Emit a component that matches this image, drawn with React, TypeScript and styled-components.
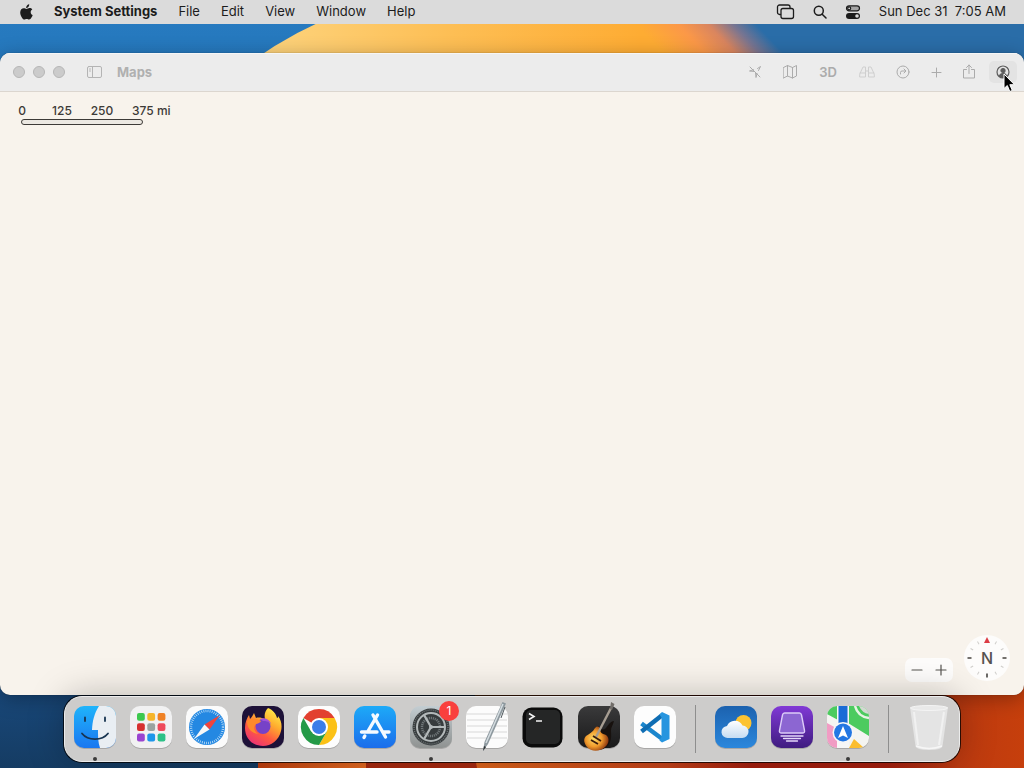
import React from 'react';
import styled, { createGlobalStyle, css } from 'styled-components';

const GlobalStyle = createGlobalStyle`
  * { box-sizing: border-box; }
  html, body { margin: 0; height: 100%; overflow: hidden; }
  #root { height: 100%; }
  body, button { font-family: Inter, "Liberation Sans", sans-serif; }
  button { border: 0; padding: 0; background: none; color: inherit; cursor: default; }
  svg { display: block; }
`;

const Desktop = styled.div`
  position: relative;
  isolation: isolate;
  display: flex;
  flex-direction: column;
  min-height: 100vh;
  overflow: hidden;
  background: #17416b;
`;

const WallpaperArt = styled.svg`
  position: absolute;
  inset: 0;
  z-index: -1;
  width: 100%;
  height: 100%;
`;

const MenuBar = styled.header`
  display: flex;
  align-items: center;
  justify-content: space-between;
  height: 24px;
  padding: 0 18px 1px 20px;
  background: #dbdbdb;
  color: #1c1c1c;
`;

const MenuGroup = styled.nav`
  display: flex;
  align-items: center;
  gap: 21px;
`;

const StatusGroup = styled.div`
  display: flex;
  align-items: center;
  gap: 18px;
`;

const MenuItem = styled.button<{ $bold?: boolean }>`
  font-size: 13px;
  line-height: 15px;
  white-space: pre;
  font-weight: ${(p) => (p.$bold ? 700 : 400)};
`;

const MapWindow = styled.main`
  display: flex;
  flex: 1;
  flex-direction: column;
  margin-top: 29px;
  margin-bottom: 1px;
  border-radius: 10px;
  overflow: hidden;
  background: #f8f3ec;
  box-shadow: 0 0 1px rgba(0, 0, 0, 0.6), 0 4px 20px rgba(0, 0, 0, 0.3);
`;

const TitleBar = styled.div`
  display: flex;
  align-items: center;
  height: 39px;
  padding: 0 7px 0 13px;
  background: #ececec;
  border-bottom: 1px solid #dcd6cf;
  box-shadow: inset 0 1px #f6f6f6;
`;

const TrafficLights = styled.div`
  display: flex;
  gap: 8px;
`;

const TrafficLight = styled.button`
  width: 12px;
  height: 12px;
  border: 1px solid #b6b6b6;
  border-radius: 50%;
  background: #cbcbcb;
`;

const SidebarToggle = styled.button`
  margin-left: 21px;
  color: #b4b4b4;
`;

const WindowTitle = styled.h1`
  margin: 0 0 0 14px;
  color: #b0b0b0;
  font-size: 13px;
  line-height: 16px;
  font-weight: 700;
`;

const Toolbar = styled.div`
  display: flex;
  gap: 6px;
  margin-left: auto;
`;

const ToolButton = styled.button<{ $width?: number; $tone?: 'faint' | 'active' }>`
  display: flex;
  align-items: center;
  justify-content: center;
  width: ${(p) => p.$width ?? 28}px;
  height: 22px;
  border-radius: 5px;
  color: #ababab;
  font-size: 13px;
  font-weight: 600;
  ${(p) => p.$tone === 'faint' && css`color: #cfcfcf;`}
  ${(p) => p.$tone === 'active' && css`
    color: #5c5c5c;
    background: #e3e3e3;
  `}
`;

const MapCanvas = styled.section`
  display: flex;
  flex: 1;
  flex-direction: column;
  justify-content: space-between;
  padding: 12px 13px 13px 2px;
`;

const Scale = styled.div`
  color: #3d3a37;
`;

const ScaleLabels = styled.div`
  display: grid;
  grid-template-columns: repeat(4, 40px);
  font-size: 12px;
  line-height: 14px;
  font-weight: 500;
  text-align: center;
  white-space: nowrap;
`;

const ScaleEnd = styled.span`
  padding-left: 10px;
  text-align: left;
`;

const ScaleBar = styled.div`
  width: 122px;
  height: 6px;
  margin: 1px 0 0 19px;
  border: 1px solid #3d3a37;
  border-radius: 3px;
  background: #ece8e2;
`;

const MapControls = styled.div`
  display: flex;
  align-items: flex-end;
  justify-content: flex-end;
  gap: 10px;
`;

const ZoomPill = styled.div`
  display: flex;
  height: 24px;
  border-radius: 7px;
  background: #fdfcfb;
`;

const ZoomButton = styled.button`
  display: grid;
  place-items: center;
  width: 24px;
  height: 24px;
  color: #55524f;
`;

const CompassButton = styled.button`
  width: 48px;
  height: 48px;
`;

const Dock = styled.nav`
  align-self: center;
  display: flex;
  margin-bottom: 6px;
  padding: 2px 2px 0;
  border: 1px solid #ececec;
  border-radius: 18px;
  background: #cdcccb;
  box-shadow: 0 0 0 1px rgba(0, 0, 0, 0.75), 0 0 36px rgba(0, 0, 0, 0.26);
  z-index: 1;
`;

const DockItem = styled.button<{ $running?: boolean }>`
  position: relative;
  display: flex;
  flex-direction: column;
  align-items: center;
  gap: 2px;
  width: 56px;
  &::after {
    content: '';
    width: 4px;
    height: 4px;
    border-radius: 50%;
    background: ${(p) => (p.$running ? '#3b3b3b' : 'transparent')};
  }
`;

const DockDivider = styled.hr`
  width: 1px;
  height: 48px;
  margin: 6px 12px 0;
  border: 0;
  background: #8e8e8e;
`;

const Badge = styled.span`
  position: absolute;
  top: 2px;
  right: 0;
  width: 20px;
  height: 20px;
  border-radius: 50%;
  background: #f9403d;
  color: #fff;
  font-size: 12px;
  line-height: 20px;
`;

const Pointer = styled.svg`
  position: absolute;
  top: 73px;
  right: 8px;
  z-index: 2;
`;

const Wallpaper = () => (
  <WallpaperArt viewBox="0 0 1024 768" preserveAspectRatio="none" aria-hidden="true">
    <defs>
      <linearGradient id="sky" x1="0" y1="0" x2="0" y2="1">
        <stop offset="0" stopColor="#277bc1" />
        <stop offset=".1" stopColor="#2577bb" />
        <stop offset=".9" stopColor="#19487a" />
        <stop offset="1" stopColor="#153c63" />
      </linearGradient>
      <linearGradient id="petal" gradientUnits="userSpaceOnUse" x1="265" y1="40" x2="640" y2="40">
        <stop offset="0" stopColor="#fdd37c" />
        <stop offset=".5" stopColor="#fdbe54" />
        <stop offset="1" stopColor="#feac33" />
      </linearGradient>
      <linearGradient id="fade" gradientUnits="userSpaceOnUse" x1="670" y1="60" x2="733" y2="0">
        <stop offset="0" stopColor="#feac33" />
        <stop offset=".35" stopColor="#fb9848" />
        <stop offset=".6" stopColor="#d9855f" />
        <stop offset=".8" stopColor="#7a7590" />
        <stop offset="1" stopColor="#2a6da8" />
      </linearGradient>
      <linearGradient id="ember" gradientUnits="userSpaceOnUse" x1="475" y1="0" x2="1024" y2="0">
        <stop offset="0" stopColor="#e2661c" />
        <stop offset=".35" stopColor="#c9441a" />
        <stop offset=".5" stopColor="#a9200f" />
        <stop offset=".75" stopColor="#a9200f" />
        <stop offset=".88" stopColor="#bd3a10" />
        <stop offset="1" stopColor="#c63f0c" />
      </linearGradient>
      <linearGradient id="coal" gradientUnits="userSpaceOnUse" x1="258" y1="0" x2="366" y2="0">
        <stop offset="0" stopColor="#c2400f" />
        <stop offset="1" stopColor="#e86c22" />
      </linearGradient>
    </defs>
    <rect width="1024" height="768" fill="url(#sky)" />
    <path d="M240 70Q290 32 340 14H640V70Z" fill="url(#petal)" />
    <path d="M639 14H1024V70H639Z" fill="url(#fade)" />
    <path d="M475 768V640H1024V768Z" fill="url(#ember)" />
    <path d="M258 768V740H366V768Z" fill="url(#coal)" />
    <path d="M366 768V740H472L477 768Z" fill="#ab2a10" />
  </WallpaperArt>
);

const Tile = ({ fill }: { fill: string }) => (
  <>
    <rect x="7" y="8" width="42" height="42" rx="10" fill="#000" opacity=".18" />
    <rect x="7" y="7" width="42" height="42" rx="10" fill={fill} />
  </>
);

const Art = ({ children }: { children: React.ReactNode }) => (
  <svg width="56" height="56" viewBox="0 0 56 56" fill="none" aria-hidden="true">{children}</svg>
);

const Finder = () => (
  <Art>
    <defs>
      <linearGradient id="fb" x1="0" y1="0" x2="0" y2="1"><stop stopColor="#1fb4fb" /><stop offset="1" stopColor="#1a77f0" /></linearGradient>
      <clipPath id="fc"><rect x="7" y="7" width="42" height="42" rx="10" /></clipPath>
    </defs>
    <Tile fill="url(#fb)" />
    <path clipPath="url(#fc)" d="M32 7C27 15 25.500 22 25 31h6c0 7 0 12 2 18h16V7Z" fill="#e9eef3" />
    <path d="M18 18.500v3.500M38 18.500v3.500" stroke="#183450" strokeWidth="1.800" strokeLinecap="round" />
    <path d="M15 34.500c6 7.500 20 7.500 26 0" stroke="#183450" strokeWidth="1.800" strokeLinecap="round" />
  </Art>
);

const launchpadColors = ['#3dc84e', '#f6b52b', '#ef8125', '#d6302f', '#9aa3a0', '#ee4a5b', '#9a44d0', '#1e96ea', '#2cc187'];
const Launchpad = () => (
  <Art>
    <Tile fill="#f1f1f2" />
    {launchpadColors.map((c, i) => (
      <rect key={c} x={14 + (i % 3) * 10.3} y={14 + Math.floor(i / 3) * 10.3} width="7.800" height="7.800" rx="2" fill={c} />
    ))}
  </Art>
);

const Safari = () => (
  <Art>
    <Tile fill="#fbfbfb" />
    <circle cx="28" cy="28" r="18" fill="#2488e2" />
    <circle cx="28" cy="28" r="16" stroke="#d6ecfb" strokeWidth="2.4" strokeDasharray=".7 1.4" />
    <path d="M41 16 25.500 25.500l5 5Z" fill="#f0443c" />
    <path d="M15 40 25.500 25.500l5 5Z" fill="#f7f7f7" />
  </Art>
);

const Firefox = () => (
  <Art>
    <defs>
      <linearGradient id="ff" x1=".8" y1="0" x2=".2" y2="1"><stop stopColor="#fff04a" /><stop offset=".35" stopColor="#ffab2e" /><stop offset=".65" stopColor="#ff5a40" /><stop offset="1" stopColor="#e82d7d" /></linearGradient>
    </defs>
    <Tile fill="#1d1138" />
    <path d="M33 9c5 2 8 6 9 10 1 0 1-1 1-2 4 5 4 11 3 15-2 9-10 15-18 15-11 0-18-8-18-18 0-6 2-10 4-13l1 4c2-2 3-4 4-6l2 5c3-1 6 0 9 1-1-4 0-8 3-11Z" fill="url(#ff)" />
    <circle cx="28" cy="27.500" r="7.500" fill="#7642c7" />
    <path d="M12 22c4-3 10-3 14 0-1 3-5 2-6 4-2 3 0 7 3 9-7-1-11-6-11-13Z" fill="#ff8a2b" />
    <path d="M25 20c5-2 10 1 11 5-3-3-5-3-8-3Z" fill="#a252d8" />
  </Art>
);

const Chrome = () => (
  <Art>
    <Tile fill="#fdfdfd" />
    <path d="M28 28 12.410 19A18 18 0 0 1 43.590 19Z" fill="#e2402f" />
    <path d="M28 19H43.590A18 18 0 0 1 28 46L35.800 32.500Z" fill="#fbc116" />
    <path d="M20.200 32.500 12.410 19A18 18 0 0 0 28 46L35.800 32.500Z" fill="#249a47" />
    <circle cx="28" cy="28" r="9" fill="#fff" />
    <circle cx="28" cy="28" r="7" fill="#3b7de9" />
  </Art>
);

const AppStore = () => (
  <Art>
    <defs><linearGradient id="as" x1="0" y1="0" x2="0" y2="1"><stop stopColor="#1daaf8" /><stop offset="1" stopColor="#1b6deb" /></linearGradient></defs>
    <Tile fill="url(#as)" />
    <path d="M30.500 16 20.500 33M26 16 38.500 38M14.500 33H30M36 33H42M17.800 37 17 38.500" stroke="#f5faff" strokeWidth="3.4" strokeLinecap="round" />
  </Art>
);

const Settings = () => (
  <Art>
    <defs><linearGradient id="st" x1="0" y1="0" x2="0" y2="1"><stop stopColor="#c3cdd2" /><stop offset="1" stopColor="#8f9291" /></linearGradient></defs>
    <Tile fill="url(#st)" />
    <circle cx="28" cy="28" r="18.500" fill="#363b3d" />
    <circle cx="28" cy="28" r="17" stroke="#6b7173" strokeWidth="1.500" strokeDasharray="1 1" />
    <circle cx="28" cy="28" r="14" stroke="#b3b9ba" strokeWidth="2" />
    <circle cx="28" cy="28" r="9" stroke="#6f7678" strokeWidth="2.500" strokeDasharray="1.200 .8" />
    <circle cx="28" cy="28" r="3.500" fill="#363b3d" />
    <path d="M28 28H42M28 28 21 15.900M28 28 21 40.100" stroke="#b3b9ba" strokeWidth="2.200" />
    <circle cx="28" cy="28" r="2" fill="#b3b9ba" />
  </Art>
);

const TextEdit = () => (
  <Art>
    <Tile fill="#fcfcfc" />
    <path d="M8 15H48M8 21H48M8 27H48M8 33H48M8 39H48" stroke="#d8d8d8" />
    <path d="M43.500 3 47 4.500 29 45 24 52 25.500 43Z" fill="#8d989e" />
    <path d="M44 5 27 44" stroke="#d5dde1" strokeWidth="1.500" />
    <path d="M46 8 42 19" stroke="#50595e" strokeWidth="1" />
    <path d="M24 52 25 47 27 48Z" fill="#303436" />
  </Art>
);

const Terminal = () => (
  <Art>
    <rect x="7.500" y="8.500" width="40" height="40" rx="9" fill="#0b0b0b" />
    <rect x="11" y="11" width="34" height="34" rx="5" fill="#252626" />
    <path d="M14 14.500 19 17.500 14 20.500M21 22H27" stroke="#f4f4f4" strokeWidth="1.600" />
  </Art>
);

const GarageBand = () => (
  <Art>
    <defs>
      <linearGradient id="gt" x1="0" y1="0" x2="0" y2="1"><stop stopColor="#3a3a3b" /><stop offset="1" stopColor="#19191a" /></linearGradient>
      <radialGradient id="gb" cx=".4" cy=".5" r=".6"><stop stopColor="#ffdf6a" /><stop offset=".55" stopColor="#f09a2c" /><stop offset="1" stopColor="#8a3510" /></radialGradient>
    </defs>
    <Tile fill="url(#gt)" />
    <path d="M24 29c2-2 4-2 5 0 2 2 4 2 6 0 3-4 5-7 8-7-1 4-3 6-3 9 0 5 1 9-2 14-3 5-8 6-13 6Z" fill="#17110e" />
    <path d="M15 37c3-2 7-4 9-8 2-2 4-2 5 1 0 4 3 5 6 6 4 3 3 9-1 12-5 5-14 5-18 0-3-4-4-8-1-11Z" fill="url(#gb)" />
    <path d="M25 38 40 9" stroke="#a69d92" strokeWidth="2.400" />
    <path d="M39 10 40 3 43.500 5 41 11Z" fill="#716d69" />
    <path d="M22 37 30 42M20 41 27 45" stroke="#3a1c0c" strokeWidth="1.800" />
  </Art>
);

const VSCode = () => (
  <Art>
    <Tile fill="#fdfdfd" />
    <path d="M14.500 24.500 36 40.500" stroke="#1b86cd" strokeWidth="4.500" />
    <path d="M14.500 32.500 36 15.500" stroke="#0f6db3" strokeWidth="4.500" />
    <path d="M35 13 42.500 16.500V40L35 43.500 32.500 41.500 34.500 38V18.500L32.500 15.500Z" fill="#2795df" />
  </Art>
);

const Weather = () => (
  <Art>
    <defs>
      <linearGradient id="wb" x1="0" y1="0" x2="0" y2="1"><stop stopColor="#1c62af" /><stop offset="1" stopColor="#2b87dc" /></linearGradient>
      <linearGradient id="wc" x1="0" y1="0" x2="0" y2="1"><stop stopColor="#fff" /><stop offset="1" stopColor="#c5dcf2" /></linearGradient>
    </defs>
    <Tile fill="url(#wb)" />
    <circle cx="35.500" cy="24" r="8" fill="#fcc331" />
    <path d="M20 39a6 6 0 0 1-1-12 8.500 8.500 0 0 1 15.500-.5 6.200 6.200 0 0 1-.5 12.500Z" fill="url(#wc)" />
  </Art>
);

const PurpleApp = () => (
  <Art>
    <defs><linearGradient id="pa" x1="0" y1="0" x2="0" y2="1"><stop stopColor="#8139d6" /><stop offset="1" stopColor="#3f1c80" /></linearGradient></defs>
    <Tile fill="url(#pa)" />
    <path d="M20.500 14H35.500Q37 14 37.500 16L40.500 31.500Q41 34 38.500 34H17.500Q15 34 15.500 31.500L18.500 16Q19 14 20.500 14Z" fill="#8c66d2" stroke="#dccbf8" strokeWidth="1.400" />
    <path d="M17 37H39M19.500 39.500H36.500M22.500 42H33.500" stroke="#e5d8fa" strokeWidth="1.300" strokeLinecap="round" />
  </Art>
);

const MapsApp = () => (
  <Art>
    <defs><clipPath id="mc"><rect x="7" y="7" width="42" height="42" rx="10" /></clipPath></defs>
    <Tile fill="#f4f4f1" />
    <g clipPath="url(#mc)">
      <path d="M7 7H18V21L7 15ZM28 7H49V37L28 24Z" fill="#4ccb5f" />
      <path d="M7 24 18 30V49H7Z" fill="#f19cc4" />
      <path d="M29 49 34 40 44 49Z" fill="#fbbd2e" />
      <path d="M35 7Q38 18 49 19" stroke="#e6f4e4" strokeWidth="2.500" />
      <path d="M39 7Q42 14 49 15V7Z" fill="#d3d9d2" />
      <path d="M17 7H29V49H17Z" fill="#f7f7f7" />
      <path d="M18.500 7H27.500V26H18.500Z" fill="#1b6bd6" />
    </g>
    <circle cx="23" cy="33.500" r="10.500" fill="#f7f7f7" />
    <circle cx="23" cy="33.500" r="9" fill="#2377e3" />
    <path d="M23 27 28 39 23 36.500 18 39Z" fill="#fff" />
  </Art>
);

const Trash = () => (
  <Art>
    <path d="M9 8 14.500 47Q15 51 28 51T41.500 47L47 8Z" fill="#e4e4e4" />
    <path d="M13 13 17 46M43 13 38 46" stroke="#f1f1f1" strokeWidth="2" />
    <ellipse cx="28" cy="9" rx="18.500" ry="2.500" fill="#e9e9e9" stroke="#f4f4f4" />
    <path d="M15 47Q28 52 41 47" stroke="#f6f6f6" strokeWidth="1.500" />
  </Art>
);

type App = { name: string; Icon: () => React.JSX.Element; running?: boolean; badge?: string };
const dockSections: App[][] = [
  [
    { name: 'Finder', Icon: Finder, running: true },
    { name: 'Launchpad', Icon: Launchpad },
    { name: 'Safari', Icon: Safari },
    { name: 'Firefox', Icon: Firefox },
    { name: 'Chrome', Icon: Chrome },
    { name: 'App Store', Icon: AppStore },
    { name: 'System Settings', Icon: Settings, running: true, badge: '1' },
    { name: 'TextEdit', Icon: TextEdit },
    { name: 'Terminal', Icon: Terminal },
    { name: 'GarageBand', Icon: GarageBand },
    { name: 'Visual Studio Code', Icon: VSCode },
  ],
  [
    { name: 'Weather', Icon: Weather },
    { name: 'Disk utility', Icon: PurpleApp },
    { name: 'Maps', Icon: MapsApp, running: true },
  ],
  [{ name: 'Trash', Icon: Trash }],
];

const Glyph = ({ w = 16, h = 16, sw = 1, children }: { w?: number; h?: number; sw?: number; children: React.ReactNode }) => (
  <svg width={w} height={h} viewBox={`0 0 ${w} ${h}`} fill="none" stroke="currentColor" strokeWidth={sw} strokeLinecap="round" strokeLinejoin="round" aria-hidden="true">
    {children}
  </svg>
);

const compassTicks = [30, 60, 120, 150, 210, 240, 300, 330];

export default function App() {
  return (
    <Desktop>
      <GlobalStyle />
      <Wallpaper />
      <MenuBar>
        <MenuGroup aria-label="Menu bar">
          <MenuItem aria-label="Apple menu">
            <svg width="13" height="16" viewBox="0 0 13 16" fill="currentColor" aria-hidden="true">
              <path d="M9.200.3c.1 1.100-.3 2-.9 2.700-.6.700-1.400 1.100-2.200 1-.1-1 .3-1.900.9-2.600C7.600.800 8.500.400 9.200.3ZM12.300 5.500c-1 .6-1.600 1.500-1.600 2.700 0 1.400.8 2.400 2 2.900-.3 1-.8 1.900-1.400 2.700-.6.900-1.200 1.700-2.200 1.700-.9 0-1.300-.5-2.400-.5s-1.500.5-2.400.5c-1 0-1.600-.8-2.300-1.800C1 12.400.2 10.500.2 8.500c0-2.800 1.700-4.300 3.600-4.300 1.100 0 2 .7 2.700.7.600 0 1.700-.8 3-.8 1.100 0 2.200.5 2.800 1.400Z" />
            </svg>
          </MenuItem>
          <MenuItem $bold>System Settings</MenuItem>
          <MenuItem>File</MenuItem>
          <MenuItem>Edit</MenuItem>
          <MenuItem>View</MenuItem>
          <MenuItem>Window</MenuItem>
          <MenuItem>Help</MenuItem>
        </MenuGroup>
        <StatusGroup>
          <MenuItem aria-label="Screen mirroring">
            <Glyph w={19} sw={1.3}>
              <path d="M4.500 10.500H3.500A2 2 0 0 1 1.500 8.500V3A2 2 0 0 1 3.500 1H12A2 2 0 0 1 14 3V4" />
              <rect x="5" y="4.500" width="12.500" height="10" rx="2" />
            </Glyph>
          </MenuItem>
          <MenuItem aria-label="Search"><Glyph w={14} h={14} sw={1.5}><circle cx="5.800" cy="5.800" r="4.500" /><path d="M9.200 9.200 13 13" /></Glyph></MenuItem>
          <MenuItem aria-label="Control Center">
            <Glyph sw={1.2}>
              <rect x="1.500" y="1.800" width="13" height="5" rx="2.500" fill="#a5a5a5" />
              <circle cx="4.200" cy="4.300" r="1.500" fill="#dbdbdb" />
              <rect x="1" y="9" width="14" height="6" rx="3" fill="currentColor" stroke="none" />
              <circle cx="12" cy="12" r="1.800" fill="#dbdbdb" stroke="none" />
            </Glyph>
          </MenuItem>
          <MenuItem>Sun Dec 31  7:05 AM</MenuItem>
        </StatusGroup>
      </MenuBar>

      <MapWindow>
        <TitleBar>
          <TrafficLights>
            <TrafficLight aria-label="Close" />
            <TrafficLight aria-label="Minimize" />
            <TrafficLight aria-label="Zoom window" />
          </TrafficLights>
          <SidebarToggle aria-label="Toggle sidebar">
            <Glyph w={17} h={13}><rect x="1.500" y=".5" width="14" height="11" rx="1.500" /><path d="M6.500.5V11.500M3.500 3H4.500M3.500 5H4.500" /></Glyph>
          </SidebarToggle>
          <WindowTitle>Maps</WindowTitle>
          <Toolbar>
            <ToolButton aria-label="Current location">
              <Glyph w={14} h={14}><path d="M9.500 3.500 12.500 1.500 10.500 5.500M9 8.500 8 12.500 7.500 7.500M6.500 6.500 1.500 6 5.500 4.700M2 2 12 12" /></Glyph>
            </ToolButton>
            <ToolButton $width={30} aria-label="Map mode">
              <Glyph w={14} h={14}><path d="M.5 2.500 4.500.5 9.500 2.500 13.500.5V11L9.500 13 4.500 11 .5 13ZM4.500.5V11M9.500 2.500V13" /></Glyph>
            </ToolButton>
            <ToolButton $width={34}>3D</ToolButton>
            <ToolButton $width={32} $tone="faint" aria-label="Look around">
              <Glyph h={14}><path d="M1 8.500 4 2H6.500V12H1ZM15 8.500 12 2H9.500V12H15ZM1 8H6.500M9.500 8H15M6.500 6H9.500" /></Glyph>
            </ToolButton>
            <ToolButton aria-label="Directions">
              <Glyph w={14} h={14}><circle cx="7" cy="7" r="6" /><path d="M4.500 9V7.500Q4.500 6 6 6H9.500M8 4 10 6 8 8" /></Glyph>
            </ToolButton>
            <ToolButton $width={26} aria-label="Add"><Glyph w={12} h={12}><path d="M6.500 2V11M2 6.500H11" /></Glyph></ToolButton>
            <ToolButton aria-label="Share">
              <Glyph w={14}><path d="M4.500 5.500H1.500V14H12.500V5.500H9.500M7 9.500V1M4.500 3.500 7 1 9.500 3.500" /></Glyph>
            </ToolButton>
            <ToolButton $tone="active" aria-label="Account">
              <Glyph w={14} h={14} sw={1.2}><circle cx="7" cy="7" r="6" /><circle cx="7" cy="5.500" r="2" fill="currentColor" /><path d="M3.500 11Q4 8.500 7 8.500T10.500 11Q9 12.500 7 12.500T3.500 11Z" fill="currentColor" /></Glyph>
            </ToolButton>
          </Toolbar>
        </TitleBar>
        <MapCanvas>
          <Scale>
            <ScaleLabels><span>0</span><span>125</span><span>250</span><ScaleEnd>375 mi</ScaleEnd></ScaleLabels>
            <ScaleBar />
          </Scale>
          <MapControls>
            <ZoomPill>
              <ZoomButton aria-label="Zoom out"><Glyph w={12} h={12} sw={1.2}><path d="M1 6H11" /></Glyph></ZoomButton>
              <ZoomButton aria-label="Zoom in"><Glyph w={12} h={12} sw={1.2}><path d="M1 6H11M6 1V11" /></Glyph></ZoomButton>
            </ZoomPill>
            <CompassButton aria-label="Compass">
              <svg width="48" height="48" viewBox="0 0 48 48" aria-hidden="true">
                <circle cx="24" cy="24" r="23" fill="#fdfcfb" />
                {compassTicks.map((a) => <path key={a} d="M24 5V8" stroke="#cfcdca" transform={`rotate(${a} 24 24)`} />)}
                <path d="M4.500 24H8.500M39.500 24H43.500M24 39.500V43.500" stroke="#45423f" strokeWidth="1.600" />
                <path d="M24 3 27 9H21Z" fill="#dc3c45" />
                <text x="24" y="30" textAnchor="middle" fontSize="16" fontWeight="500" fill="#55524f">N</text>
              </svg>
            </CompassButton>
          </MapControls>
        </MapCanvas>
      </MapWindow>

      <Dock aria-label="Dock">
        {dockSections.map((apps, i) => (
          <React.Fragment key={i}>
            {i > 0 && <DockDivider />}
            {apps.map(({ name, Icon, running, badge }) => (
              <DockItem key={name} aria-label={name} $running={running}>
                <Icon />
                {badge && <Badge>{badge}</Badge>}
              </DockItem>
            ))}
          </React.Fragment>
        ))}
      </Dock>

      <Pointer width="13" height="20" viewBox="0 0 13 20" aria-hidden="true">
        <path d="M1 1V15.500L4.300 12.500 6.800 18.500 9.300 17.400 6.800 11.700H11.500Z" fill="#000" stroke="#fff" />
      </Pointer>
    </Desktop>
  );
}
